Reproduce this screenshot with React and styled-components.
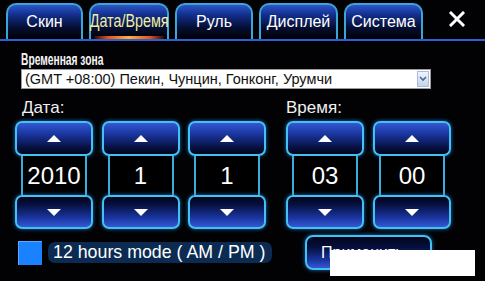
import styled, { createGlobalStyle } from 'styled-components';

const GlobalStyle = createGlobalStyle`
  html, body {
    margin: 0;
    padding: 0;
    background: #000;
  }
  body {
    font-family: "Liberation Sans", Arial, sans-serif;
  }
`;

const Screen = styled.div`
  position: relative;
  width: 485px;
  height: 281px;
  overflow: hidden;
  background: #020204;
  color: #fff;
  font-family: "Liberation Sans", Arial, sans-serif;
`;

const TabBar = styled.div`
  display: flex;
  align-items: flex-end;
  gap: 6px;
  height: 39px;
  padding-left: 6px;
  border-bottom: 2px solid #2a62d6;
`;

const Tab = styled.div`
  position: relative;
  width: ${p => p.$w}px;
  height: 36px;
  box-sizing: border-box;
  border: 2px solid #3ba6d6;
  border-bottom: none;
  border-radius: 10px 10px 0 0;
  background: linear-gradient(180deg, #2d55c8 0%, #13308f 28%, #050f36 65%, #000 100%);
  display: flex;
  align-items: center;
  justify-content: center;
  padding-bottom: 1px;
  font-size: ${p => (p.$active ? 17.5 : 16)}px;
  color: ${p => (p.$active ? '#f2eea2' : '#fff')};
  white-space: nowrap;

  &::after {
    content: '';
    display: ${p => (p.$active ? 'block' : 'none')};
    position: absolute;
    left: 3px;
    right: 3px;
    bottom: 0;
    height: 3px;
    background: linear-gradient(90deg, rgba(200, 40, 10, 0.2), #e8501a 20%, #ffb040 50%, #e8501a 80%, rgba(200, 40, 10, 0.2));
  }
`;

/* no narrow face is installed, so squeeze the regular one */
const Narrow = styled.span`
  display: inline-block;
  transform: scaleX(${p => p.$scale});
  transform-origin: ${p => p.$origin || 'center'};
`;

const Close = styled.div`
  flex: 1;
  height: 39px;
  display: flex;
  align-items: center;
  justify-content: center;
  padding-bottom: 2px;
  box-sizing: border-box;
`;

const ZoneBlock = styled.div`
  margin: 10px 0 0 21px;
`;

const SmallLabel = styled.div`
  font-weight: bold;
  font-size: 16px;
  line-height: 17px;
  height: 18px;
  color: #f4f4f4;
  white-space: nowrap;
`;

const Select = styled.div`
  width: 410px;
  height: 20px;
  box-sizing: border-box;
  background: #fff;
  border: 1px solid #9a9a9a;
  display: flex;
  align-items: center;
  justify-content: space-between;
  padding: 0 1px 0 3px;
  color: #111;
  font-size: 14.5px;
`;

const SelectArrow = styled.div`
  width: 12px;
  height: 16px;
  box-sizing: border-box;
  border: 1px solid #a8bcd8;
  background: linear-gradient(180deg, #f0f4fc, #c4d4ec);
  display: flex;
  align-items: center;
  justify-content: center;
`;

const Panels = styled.div`
  display: flex;
  margin-top: 10px;
  padding-left: 15px;
  gap: 20px;
`;

const Group = styled.div`
  display: flex;
  flex-direction: column;
`;

const GroupLabel = styled.div`
  font-size: 17px;
  line-height: 18px;
  height: 18px;
  padding-left: ${p => p.$indent}px;
  color: #f0f0f0;
`;

const SpinRow = styled.div`
  display: flex;
  gap: ${p => p.$gap}px;
  margin-top: 4px;
`;

const Spinner = styled.div`
  width: 78px;
  display: flex;
  flex-direction: column;
`;

const SpinButton = styled.div`
  height: ${p => p.$h}px;
  box-sizing: border-box;
  border: 2px solid #42c2f2;
  border-radius: 7px;
  box-shadow: 0 0 4px rgba(40, 150, 255, 0.7);
  background: ${p => (p.$dir === 'up'
    ? 'linear-gradient(180deg, #3458d4 0%, #1a36a0 35%, #061040 80%, #02051a 100%)'
    : 'linear-gradient(180deg, #02051a 0%, #061040 25%, #1a36a0 70%, #3458d4 100%)')};
  display: flex;
  align-items: center;
  justify-content: center;
`;

const Arrow = styled.div`
  width: 0;
  height: 0;
  border-left: 7px solid transparent;
  border-right: 7px solid transparent;
  ${p => (p.$dir === 'up'
    ? 'border-bottom: 7px solid #fff;'
    : 'border-top: 7px solid #fff;')}
`;

const Value = styled.div`
  height: 39px;
  margin: 0 6px;
  border-left: 2px solid #38aedd;
  border-right: 2px solid #38aedd;
  background: #000;
  display: flex;
  align-items: center;
  justify-content: center;
  font-size: 24px;
  color: #fff;
`;

const BottomRow = styled.div`
  display: flex;
  align-items: center;
  margin-top: 6px;
  padding-left: 18px;
  height: 35px;
`;

const Check = styled.div`
  width: 24px;
  height: 24px;
  box-sizing: border-box;
  background: #1b82ff;
  border-top: 1px solid #5aa8ff;
  border-left: 1px solid #5aa8ff;
  margin-right: 6px;
`;

const CheckLabel = styled.div`
  width: 224px;
  height: 21px;
  box-sizing: border-box;
  padding-left: 5px;
  border-radius: 7px;
  background: #0b2b52;
  font-size: 17.8px;
  line-height: 21px;
  white-space: nowrap;
  color: #fff;
`;

const ApplyButton = styled.div`
  width: 127px;
  height: 35px;
  margin-left: 33px;
  box-sizing: border-box;
  border: 2px solid #42c2f2;
  border-radius: 8px;
  box-shadow: 0 0 4px rgba(40, 150, 255, 0.7);
  background: linear-gradient(180deg, #02051a 0%, #061040 35%, #1a36a0 75%, #3458d4 100%);
  padding-left: 14px;
  font-size: 16px;
  line-height: 31px;
  color: #fff;
`;

const Blank = styled.div`
  position: absolute;
  left: 330px;
  top: 250px;
  width: 145px;
  height: 26px;
  background: #fff;
`;

const tabs = [
  { label: 'Скин', w: 77 },
  { label: 'Дата/Время', w: 80, active: true },
  { label: 'Руль', w: 78 },
  { label: 'Дисплей', w: 79 },
  { label: 'Система', w: 79 },
];

const SpinnerBox = ({ value }) => (
  <Spinner>
    <SpinButton $dir="up" $h={35}><Arrow $dir="up" /></SpinButton>
    <Value>{value}</Value>
    <SpinButton $dir="down" $h={34}><Arrow $dir="down" /></SpinButton>
  </Spinner>
);

export default function App() {
  return (
    <>
      <GlobalStyle />
      <Screen>
        <TabBar>
          {tabs.map(t => (
            <Tab key={t.label} $w={t.w} $active={t.active}>
              {t.active ? <Narrow $scale={0.82}>{t.label}</Narrow> : t.label}
            </Tab>
          ))}
          <Close>
            <svg width="16" height="16" viewBox="0 0 16 16">
              <path d="M2 2 L14 14 M14 2 L2 14" stroke="#fff" strokeWidth="3" strokeLinecap="square" />
            </svg>
          </Close>
        </TabBar>

        <ZoneBlock>
          <SmallLabel>
            <Narrow $scale={0.64} $origin="left">Временная зона</Narrow>
          </SmallLabel>
          <Select>
            <span>(GMT +08:00) Пекин, Чунцин, Гонконг, Урумчи</span>
            <SelectArrow>
              <svg width="8" height="6" viewBox="0 0 8 6">
                <path d="M1 1 L4 4 L7 1" stroke="#4a6a9a" strokeWidth="1.6" fill="none" />
              </svg>
            </SelectArrow>
          </Select>
        </ZoneBlock>

        <Panels>
          <Group>
            <GroupLabel $indent={7}>Дата:</GroupLabel>
            <SpinRow $gap={8.5}>
              <SpinnerBox value="2010" />
              <SpinnerBox value="1" />
              <SpinnerBox value="1" />
            </SpinRow>
          </Group>
          <Group>
            <GroupLabel $indent={0}>Время:</GroupLabel>
            <SpinRow $gap={9}>
              <SpinnerBox value="03" />
              <SpinnerBox value="00" />
            </SpinRow>
          </Group>
        </Panels>

        <BottomRow>
          <Check />
          <CheckLabel>12 hours mode ( AM / PM )</CheckLabel>
          <ApplyButton>Применить</ApplyButton>
        </BottomRow>

        <Blank />
      </Screen>
    </>
  );
}
